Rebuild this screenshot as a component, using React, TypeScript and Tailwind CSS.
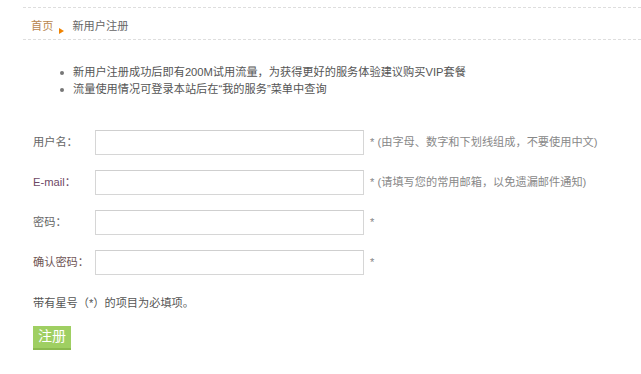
import React from "react";

const font = {
  fontFamily: '"Liberation Sans", "Noto Sans CJK SC", sans-serif',
};

const rows = [
  { label: "用户名：", hint: "* (由字母、数字和下划线组成，不要使用中文)", color: "text-[#666]" },
  { label: "E-mail：", hint: "* (请填写您的常用邮箱，以免遗漏邮件通知)", color: "text-[#6e4866]" },
  { label: "密码：", hint: "*", color: "text-[#666]" },
  { label: "确认密码：", hint: "*", color: "text-[#6f5555]" },
];

export default function App() {
  return (
    <div className="h-[374px] w-[641px] bg-white text-[11.2px] text-[#666]" style={font}>
      <div className="pl-[23px] pt-[7px]">
        <div className="flex h-[33px] items-center border-y border-dashed border-[#dedede] pl-[8px] pt-[5px]">
          <span className="text-[#b8864e]">首页</span>
          <span className="ml-[6px] mr-[8px] mt-[9px] h-0 w-0 border-y-[3px] border-l-[5px] border-y-transparent border-l-[#f08300]" />
          <span>新用户注册</span>
        </div>
      </div>

      <ul className="ml-[60px] mt-[24px] leading-[17px] text-[#555]">
        <li className="flex items-center">
          <span className="mr-[9px] h-[4px] w-[4px] rounded-full bg-[#777]" />
          新用户注册成功后即有200M试用流量，为获得更好的服务体验建议购买VIP套餐
        </li>
        <li className="flex items-center">
          <span className="mr-[9px] h-[4px] w-[4px] rounded-full bg-[#777]" />
          流量使用情况可登录本站后在“我的服务”菜单中查询
        </li>
      </ul>

      <form className="ml-[33px] mt-[32px]" onSubmit={(e) => e.preventDefault()}>
        {rows.map((r) => (
          <div key={r.label} className="mb-[15px] flex h-[25px] items-center">
            <label className={`w-[62px] ${r.color}`}>{r.label}</label>
            <input
              type={r.label.includes("密码") ? "password" : "text"}
              className="h-[25px] w-[269px] border border-[#d6d6d6] border-t-[#cfcfcf] bg-white outline-none"
            />
            <span className="ml-[6px] text-[#888]">{r.hint}</span>
          </div>
        ))}
        <p className="mt-[20px] text-[#555]">带有星号（*）的项目为必填项。</p>
        <button
          type="submit"
          className="mt-[14px] h-[24px] w-[38px] border-b-2 border-[#8bba4f] bg-[#9fcf62] text-[14px] text-white"
        >
          注册
        </button>
      </form>
    </div>
  );
}
